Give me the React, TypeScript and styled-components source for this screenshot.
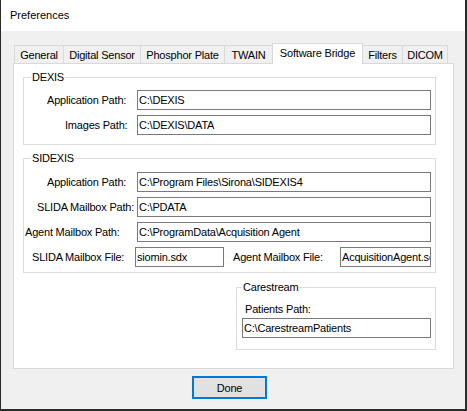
import React from "react";
import styled, { createGlobalStyle } from "styled-components";

const Global = createGlobalStyle`
  html, body { margin: 0; padding: 0; background: #f0f0f0; }
  body {
    font-family: "Liberation Sans", Arial, sans-serif;
    font-size: 11px;
    color: #000;
  }
  * { box-sizing: border-box; }
`;

const Window = styled.div`
  width: 467px;
  height: 411px;
  background: #f0f0f0;
  border-left: 1px solid #2b2b2b;
  border-right: 2px solid #2b2b2b;
  border-bottom: 2px solid #2b2b2b;
  display: flex;
  flex-direction: column;
`;

const TitleBar = styled.div`
  height: 31px;
  flex: none;
  background: #fff;
  padding-left: 9px;
  line-height: 31px;
  font-size: 11px;
`;

const Body = styled.div`
  padding: 12px 11px 0 12px;
  display: flex;
  flex-direction: column;
`;

const TabStrip = styled.div`
  display: flex;
  align-items: flex-end;
  height: 20px;
  padding-left: 1px;
`;

const Tab = styled.div<{ $w: number; $active?: boolean }>`
  width: ${(p) => p.$w + 1}px;
  margin-right: -1px;
  height: ${(p) => (p.$active ? 21 : 18)}px;
  margin-bottom: ${(p) => (p.$active ? -1 : 0)}px;
  border: 1px solid #d9d9d9;
  border-bottom: none;
  background: ${(p) => (p.$active ? "#fff" : "#f0f0f0")};
  position: ${(p) => (p.$active ? "relative" : "static")};
  z-index: ${(p) => (p.$active ? 1 : "auto")};
  padding-top: ${(p) => (p.$active ? 1 : 1)}px;
  line-height: 16px;
  text-align: center;
  white-space: nowrap;
  letter-spacing: -0.2px;
`;

const Panel = styled.div`
  width: 441px;
  height: 306px;
  border: 1px solid #d9d9d9;
  background: #fff;
  display: flex;
  flex-direction: column;
`;

const Group = styled.div<{ $top: number; $left: number; $w: number; $h: number }>`
  margin-top: ${(p) => p.$top}px;
  margin-left: ${(p) => p.$left}px;
  width: ${(p) => p.$w}px;
  height: ${(p) => p.$h}px;
  border: 1px solid #dcdcdc;
  display: flex;
  flex-direction: column;
`;

const Legend = styled.div<{ $left: number }>`
  width: fit-content;
  margin: -7px 0 0 ${(p) => p.$left}px;
  padding: 0 1px;
  background: #fff;
  line-height: 13px;
  letter-spacing: -0.2px;
`;

const Rows = styled.div<{ $top: number }>`
  margin-top: ${(p) => p.$top}px;
  display: flex;
  flex-direction: column;
  gap: 5px;
`;

const Row = styled.div`
  display: flex;
  align-items: center;
  height: 20px;
`;

const Label = styled.div<{ $w: number; $indent: number }>`
  width: ${(p) => p.$w}px;
  flex: none;
  padding-left: ${(p) => p.$indent}px;
  white-space: nowrap;
  letter-spacing: -0.2px;
  line-height: 13px;
`;

const TextBox = styled.div<{ $w: number }>`
  width: ${(p) => p.$w}px;
  height: 20px;
  flex: none;
  border: 1px solid #7a7a7a;
  background: #fff;
  padding: 0 1px;
  line-height: 18px;
  white-space: nowrap;
  overflow: hidden;
  letter-spacing: -0.2px;
`;

const StackLabel = styled.div<{ $top: number; $indent: number }>`
  margin: ${(p) => p.$top}px 0 0 ${(p) => p.$indent}px;
  line-height: 13px;
  letter-spacing: -0.2px;
`;

const StackBox = styled(TextBox)<{ $top: number; $indent: number }>`
  margin: ${(p) => p.$top}px 0 0 ${(p) => p.$indent}px;
`;

const ButtonRow = styled.div`
  display: flex;
  padding-left: 179px;
  margin-top: 7px;
`;

const Button = styled.div`
  width: 75px;
  height: 23px;
  border: 2px solid #0078d7;
  background: #e1e1e1;
  display: flex;
  align-items: center;
  justify-content: center;
  letter-spacing: -0.2px;
`;

const tabs = [
  { label: "General", w: 49 },
  { label: "Digital Sensor", w: 77 },
  { label: "Phosphor Plate", w: 84 },
  { label: "TWAIN", w: 48 },
  { label: "Software Bridge", w: 90, active: true },
  { label: "Filters", w: 40 },
  { label: "DICOM", w: 45 },
];

export default function App() {
  return (
    <>
      <Global />
      <Window>
        <TitleBar>Preferences</TitleBar>
        <Body>
          <TabStrip>
            {tabs.map((t) => (
              <Tab key={t.label} $w={t.w} $active={t.active}>
                {t.label}
              </Tab>
            ))}
          </TabStrip>
          <Panel>
            <Group $top={13} $left={9} $w={413} $h={68}>
              <Legend $left={7}>DEXIS</Legend>
              <Rows $top={6}>
                <Row>
                  <Label $w={113} $indent={23}>Application Path:</Label>
                  <TextBox $w={294}>C:\DEXIS</TextBox>
                </Row>
                <Row>
                  <Label $w={113} $indent={41}>Images Path:</Label>
                  <TextBox $w={294}>C:\DEXIS\DATA</TextBox>
                </Row>
              </Rows>
            </Group>
            <Group $top={13} $left={9} $w={413} $h={115}>
              <Legend $left={7}>SIDEXIS</Legend>
              <Rows $top={7}>
                <Row>
                  <Label $w={113} $indent={23}>Application Path:</Label>
                  <TextBox $w={294}>C:\Program Files\Sirona\SIDEXIS4</TextBox>
                </Row>
                <Row>
                  <Label $w={113} $indent={13}>SLIDA Mailbox Path:</Label>
                  <TextBox $w={294}>C:\PDATA</TextBox>
                </Row>
                <Row>
                  <Label $w={113} $indent={1}>Agent Mailbox Path:</Label>
                  <TextBox $w={294}>C:\ProgramData\Acquisition Agent</TextBox>
                </Row>
                <Row>
                  <Label $w={111} $indent={8}>SLIDA Mailbox File:</Label>
                  <TextBox $w={89}>siomin.sdx</TextBox>
                  <Label $w={116} $indent={9}>Agent Mailbox File:</Label>
                  <TextBox $w={91}>AcquisitionAgent.sdx</TextBox>
                </Row>
              </Rows>
            </Group>
            <Group $top={14} $left={222} $w={200} $h={63}>
              <Legend $left={5}>Carestream</Legend>
              <StackLabel $top={9} $indent={8}>Patients Path:</StackLabel>
              <StackBox $w={189} $top={2} $indent={5}>C:\CarestreamPatients</StackBox>
            </Group>
          </Panel>
          <ButtonRow>
            <Button>Done</Button>
          </ButtonRow>
        </Body>
      </Window>
    </>
  );
}
